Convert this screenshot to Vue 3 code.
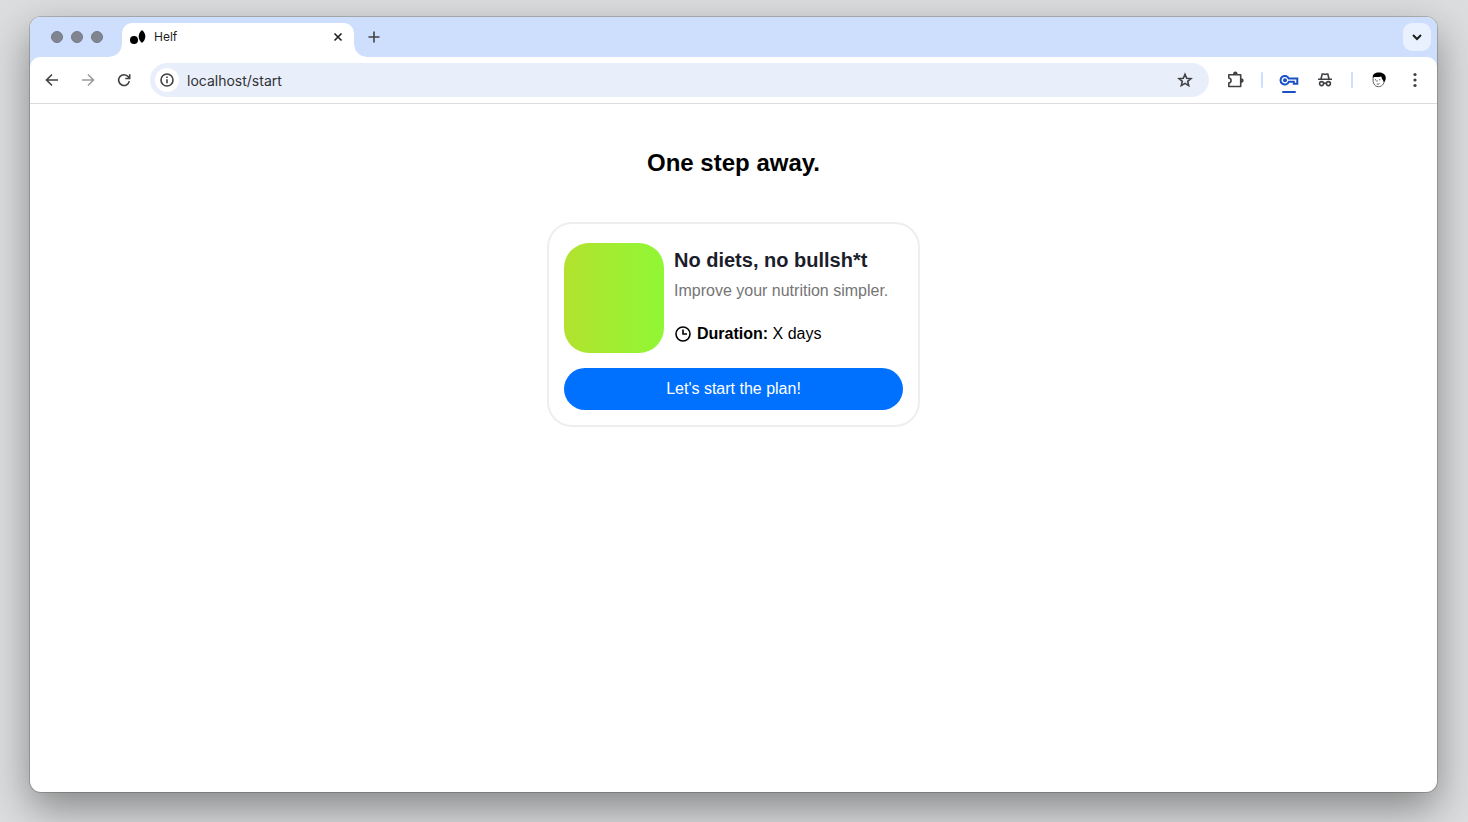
<script setup>
import { ref } from 'vue'

const address = ref('localhost/start')
</script>

<template>
  <div class="desktop">
    <div class="window">
      <header class="tab-strip">
        <div class="lights"><span></span><span></span><span></span></div>
        <div class="tab">
          <svg class="favicon" width="16" height="16" viewBox="0 0 16 16" aria-hidden="true">
            <circle cx="4" cy="11" r="4" />
            <path d="M12 1C14.200 3 15.300 5 15.300 7.500S14.200 12 12 14C9.800 12 8.700 10 8.700 7.500S9.800 3 12 1Z" />
          </svg>
          <span class="tab-title">Helf</span>
          <button class="tab-close" aria-label="Close tab">
            <svg width="16" height="16" viewBox="0 0 16 16"><path d="M4.500 4.500l7 7M11.500 4.500l-7 7" /></svg>
          </button>
        </div>
        <button class="new-tab" aria-label="New tab">
          <svg width="16" height="16" viewBox="0 0 16 16"><path d="M8 2.500v11M2.500 8h11" /></svg>
        </button>
        <button class="tab-search" aria-label="Search tabs">
          <svg width="16" height="16" viewBox="0 0 16 16"><path d="M4 6L8 10l4-4" /></svg>
        </button>
      </header>

      <nav class="toolbar" aria-label="Browser toolbar">
        <div class="history">
          <button aria-label="Back">
            <svg width="16" height="16" viewBox="0 0 16 16"><path d="M14 8H2.800M8 2.500L2.500 8 8 13.500" /></svg>
          </button>
          <button class="muted" aria-label="Forward">
            <svg width="16" height="16" viewBox="0 0 16 16"><path d="M2 8h11.200M8 2.500L13.500 8 8 13.500" /></svg>
          </button>
          <button aria-label="Reload">
            <svg width="16" height="16" viewBox="0 0 16 16"><path d="M13.300 9.200A5.400 5.400 0 1 1 12.300 4.800L13.600 6.300M13.700 2.200V6.500H9.300" /></svg>
          </button>
        </div>
        <div class="address">
          <button class="site-info" aria-label="Site information">
            <svg width="16" height="16" viewBox="0 0 16 16"><circle cx="8" cy="8" r="6" /><path d="M8 7.200v4M8 4.600v1.500" /></svg>
          </button>
          <input v-model="address" type="text" aria-label="Address" />
          <button class="bookmark" aria-label="Bookmark">
            <svg width="18" height="18" viewBox="0 0 18 18"><path d="M9 3.200l1.700 4 4.300.4-3.300 2.800 1 4.200L9 12.400l-3.700 2.200 1-4.200L3 7.600l4.300-.4Z" /></svg>
          </button>
        </div>
        <div class="tools">
          <button aria-label="Extensions">
            <svg width="20" height="20" viewBox="0 0 20 20">
              <path stroke-linejoin="round" d="M3.800 4.700H15.700V16.500H3.800V13.100C6.800 12.600 6.800 8.500 3.800 8Z" />
              <path class="solid" d="M8 4.500a2.300 2.900 0 0 1 4.600 0ZM15.700 8.300a2.900 2.300 0 0 1 0 4.600Z" />
            </svg>
          </button>
          <span class="divider"></span>
          <button class="key" aria-label="Passwords">
            <svg width="20" height="16" viewBox="0 0 20 16">
              <path d="M9.800 6.600H18.300V11.800H14.800V9.800H9.800A4.300 4.300 0 1 1 9.800 6.600Z" />
              <circle class="solid" cx="6" cy="8.200" r="2" />
            </svg>
          </button>
          <button aria-label="Incognito">
            <svg width="16" height="16" viewBox="0 0 16 16">
              <path d="M1 7.300H15M4 7L5.200 2H6.500L8 2.500 9.500 2H10.800L12 7M6.500 11.500Q8 10.500 9.500 11.500" />
              <circle cx="4.600" cy="11.600" r="2" /><circle cx="11.400" cy="11.600" r="2" />
            </svg>
          </button>
          <span class="divider"></span>
          <button aria-label="Profile">
            <svg width="16" height="16" viewBox="0 0 16 16">
              <path class="face" d="M2.300 5C1.500 9 2.500 13.500 6 14.500 9.500 15.400 12.500 13 13.300 9.500" />
              <path class="hair" d="M1.800 5.300C1.300 2 4.500.4 8 .5S14.300 2.200 14.700 5 14 9.200 13 10.200C12.200 9.700 12.400 8 11.200 7.200 10.600 6.500 10.800 5.500 10.300 4.600 7.500 5.400 4.500 4.800 1.800 5.300Z" />
              <path class="face" d="M4 7.800H5M8.200 7.800H9.400M6 8.200V9.800M5.800 12Q7.200 12.500 8.500 11.700" />
            </svg>
          </button>
          <button class="menu" aria-label="Menu">
            <svg width="16" height="16" viewBox="0 0 16 16"><g class="solid"><circle cx="8" cy="2.500" r="1.600" /><circle cx="8" cy="8" r="1.600" /><circle cx="8" cy="13.500" r="1.600" /></g></svg>
          </button>
        </div>
      </nav>

      <main class="page">
        <h1>One step away.</h1>
        <article class="card">
          <div class="plan">
            <div class="cover"></div>
            <div class="details">
              <h2>No diets, no bullsh*t</h2>
              <p class="summary">Improve your nutrition simpler.</p>
              <p class="duration">
                <svg width="18" height="18" viewBox="0 0 18 18" aria-hidden="true"><circle cx="9" cy="9" r="7" /><path d="M9 4.500V9H13" /></svg>
                <span><strong>Duration:</strong> X days</span>
              </p>
            </div>
          </div>
          <button class="start">Let's start the plan!</button>
        </article>
      </main>
    </div>
  </div>
</template>

<style>
body {
  margin: 0;
}
</style>

<style scoped>
* {
  box-sizing: border-box;
}

.desktop {
  display: flex;
  min-height: 100vh;
  padding: 17px 31px 30px 30px;
  overflow: hidden;
  background: #dcddde;
  font-family: "Liberation Sans", Arial, sans-serif;
}

.window {
  display: flex;
  flex: 1;
  flex-direction: column;
  border-radius: 11px;
  background: #fff;
  box-shadow: 0 0 0 1px rgba(0, 0, 0, 0.18), 0 16px 42px rgba(0, 0, 0, 0.4);
}

button {
  display: flex;
  align-items: center;
  justify-content: center;
  padding: 0;
  border: 0;
  background: none;
  color: #404144;
}

svg {
  flex: none;
  fill: none;
  stroke: currentColor;
  stroke-width: 1.6;
}

.solid {
  fill: currentColor;
  stroke: none;
}

.tab-strip {
  display: flex;
  align-items: flex-end;
  height: 40px;
  padding: 0 6px 0 21px;
  border-radius: 10px 10px 0 0;
  background: #cedefd;
}

.lights {
  display: flex;
  align-items: center;
  gap: 8px;
  width: 71px;
  height: 40px;
}

.lights span {
  width: 12px;
  height: 12px;
  border: 1px solid #747985;
  border-radius: 50%;
  background: #808591;
}

.tab {
  position: relative;
  display: flex;
  align-items: center;
  gap: 8px;
  width: 232px;
  height: 34px;
  padding: 0 8px 6px;
  border-radius: 10px 10px 0 0;
  background: #fff;
}

.tab::before,
.tab::after {
  position: absolute;
  bottom: 0;
  width: 12px;
  height: 12px;
  content: "";
}

.tab::before {
  right: 100%;
  background: radial-gradient(circle at 0 0, transparent 11px, #fff 12px);
}

.tab::after {
  left: 100%;
  background: radial-gradient(circle at 100% 0, transparent 11px, #fff 12px);
}

.favicon {
  fill: #000;
  stroke: none;
}

.tab-title {
  flex: 1;
  color: #1f1f1f;
  font-family: Inter, sans-serif;
  font-size: 12px;
  line-height: 14px;
}

.tab-close {
  color: #1f1f1f;
}

.new-tab {
  width: 16px;
  height: 40px;
  margin-left: 12px;
}

.tab-search {
  width: 28px;
  height: 28px;
  margin: 0 0 6px auto;
  border-radius: 9px;
  background: #e9f0fe;
  color: #1f1f1f;
}

.tab-search svg {
  stroke-width: 2;
}

.toolbar {
  display: flex;
  align-items: center;
  height: 47px;
  padding: 0 8px;
  border-bottom: 1px solid #dcdcde;
  background: linear-gradient(#cedefd, #cedefd) top / 100% 10px no-repeat;
  position: relative;
  z-index: 0;
}

.toolbar::before {
  position: absolute;
  z-index: -1;
  inset: 0;
  border-radius: 10px 10px 0 0;
  background: #fff;
  content: "";
}

.history {
  display: flex;
  gap: 8px;
  margin-right: 12px;
}

.history button,
.tools button {
  width: 28px;
  height: 28px;
}

.history .muted {
  color: #9b9b9e;
}

.address {
  display: flex;
  flex: 1;
  align-items: center;
  height: 34px;
  padding: 0 15px 0 5px;
  border-radius: 17px;
  background: #e9effa;
}

.site-info {
  width: 24px;
  height: 24px;
  border-radius: 50%;
  background: #fff;
}

.address input {
  flex: 1;
  min-width: 0;
  margin-left: 8px;
  padding: 0;
  border: 0;
  outline: 0;
  background: none;
  color: #303134;
  font-family: Inter, sans-serif;
  font-size: 14px;
}

.tools {
  display: flex;
  align-items: center;
  gap: 8px;
  margin-left: 12px;
}

.divider {
  width: 2px;
  height: 16px;
  margin: 0 4px;
  border-radius: 1px;
  background: #cedefd;
}

.tools .key {
  position: relative;
  color: #1a50c6;
}

.key svg {
  stroke-width: 2;
}

.key::after {
  position: absolute;
  bottom: 1px;
  left: 7px;
  width: 14px;
  height: 2px;
  border-radius: 1px;
  background: #1a50c6;
  content: "";
}

.face {
  stroke: #333;
  stroke-width: 0.8;
}

.hair {
  fill: #000;
  stroke: none;
}

.page {
  display: flex;
  flex: 1;
  flex-direction: column;
  align-items: center;
  padding: 45px 16px;
  color: #000;
}

h1,
h2,
p {
  margin: 0;
}

h1 {
  font-size: 24px;
  line-height: 28px;
}

.card {
  width: 373px;
  max-width: 100%;
  margin-top: 45px;
  padding: 19px 15px 15px;
  border: 2px solid #eee;
  border-radius: 25px;
}

.plan {
  display: flex;
  gap: 10px;
}

.cover {
  flex: none;
  width: 100px;
  height: 110px;
  border-radius: 25px;
  background: linear-gradient(90deg, #b3e22e, #90f735);
}

.details {
  padding-top: 5px;
}

h2 {
  color: #1c1d2b;
  font-size: 20px;
  line-height: 24px;
}

.summary {
  margin-top: 10px;
  color: #757575;
  font-size: 16px;
  line-height: 18px;
}

.duration {
  display: flex;
  align-items: center;
  gap: 5px;
  margin-top: 25px;
  font-size: 16px;
  line-height: 18px;
}

.start {
  width: 100%;
  height: 42px;
  margin-top: 15px;
  border-radius: 21px;
  background: #0070ff;
  color: #fff;
  font-family: inherit;
  font-size: 16px;
}
</style>
